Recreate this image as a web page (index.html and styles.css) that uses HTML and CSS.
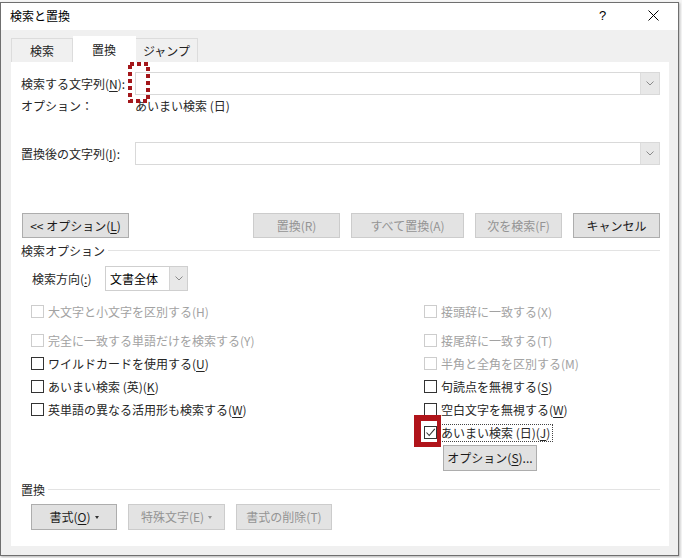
FILE: index.html
```html
<!DOCTYPE html>
<html lang="ja">
<head>
<meta charset="utf-8">
<title>検索と置換</title>
<link rel="stylesheet" href="styles.css">
</head>
<body>
<div class="window">
  <div class="titlebar">
    <span class="title">検索と置換</span>
    <span class="help">?</span>
    <span class="close"><svg width="11" height="11" viewBox="0 0 11 11"><path d="M0.5 0.5 L10.5 10.5 M10.5 0.5 L0.5 10.5" stroke="#000" stroke-width="1" fill="none"/></svg></span>
  </div>
  <div class="client">
    <div class="tabs">
      <div class="tab">検索</div>
      <div class="tab active">置換</div>
      <div class="tab">ジャンプ</div>
    </div>
    <div class="panel">
      <div class="field">
        <span class="flabel">検索する文字列(<u>N</u>):</span>
        <div class="combo"><div class="combo-btn"><svg width="8" height="5" viewBox="0 0 8 5"><path d="M0.5 0.5 L4 4 L7.5 0.5" stroke="#8a8a8a" fill="none"/></svg></div></div>
      </div>
      <div class="optline">
        <span class="flabel">オプション：</span>
        <span class="optval">あいまい検索 (日)</span>
      </div>
      <div class="field field2">
        <span class="flabel">置換後の文字列(<u>I</u>):</span>
        <div class="combo"><div class="combo-btn"><svg width="8" height="5" viewBox="0 0 8 5"><path d="M0.5 0.5 L4 4 L7.5 0.5" stroke="#8a8a8a" fill="none"/></svg></div></div>
      </div>
      <div class="btnrow">
        <button class="btn b-opt">&lt;&lt; オプション(<u>L</u>)</button>
        <div class="spacer"></div>
        <button class="btn dis b-rep">置換(R)</button>
        <button class="btn dis b-all">すべて置換(A)</button>
        <button class="btn dis b-next">次を検索(F)</button>
        <button class="btn b-cancel">キャンセル</button>
      </div>
      <div class="group g1"><span>検索オプション</span><span class="rule"></span></div>
      <div class="dir">
        <span class="dirlabel">検索方向(<u>:</u>)</span>
        <div class="select"><span class="selval">文書全体</span><div class="sel-btn"><svg width="8" height="5" viewBox="0 0 8 5"><path d="M0.5 0.5 L4 4 L7.5 0.5" stroke="#8a8a8a" fill="none"/></svg></div></div>
      </div>
      <div class="checks">
        <div class="col col-left">
          <div class="chk dis"><span class="box"></span><span>大文字と小文字を区別する(H)</span></div>
          <div class="chk dis gap"><span class="box"></span><span>完全に一致する単語だけを検索する(Y)</span></div>
          <div class="chk"><span class="box"></span><span>ワイルドカードを使用する(<u>U</u>)</span></div>
          <div class="chk"><span class="box"></span><span>あいまい検索 (英)(<u>K</u>)</span></div>
          <div class="chk"><span class="box"></span><span>英単語の異なる活用形も検索する(<u>W</u>)</span></div>
        </div>
        <div class="col col-right">
          <div class="chk dis"><span class="box"></span><span>接頭辞に一致する(X)</span></div>
          <div class="chk dis gap"><span class="box"></span><span>接尾辞に一致する(T)</span></div>
          <div class="chk dis"><span class="box"></span><span>半角と全角を区別する(M)</span></div>
          <div class="chk"><span class="box"></span><span>句読点を無視する(<u>S</u>)</span></div>
          <div class="chk"><span class="box"></span><span>空白文字を無視する(<u>W</u>)</span></div>
          <div class="chk checked"><span class="box"><svg width="11" height="11" viewBox="0 0 11 11"><path d="M1.5 5.5 L4.2 8.5 L9.8 1.8" stroke="#333" stroke-width="1.1" fill="none"/></svg></span><span class="focus">あいまい検索 (日)(<u>J</u>)</span></div>
          <button class="btn b-jopt">オプション(<u>S</u>)...</button>
        </div>
      </div>
      <div class="group g2"><span>置換</span><span class="rule"></span></div>
      <div class="btnrow2">
        <button class="btn b-fmt">書式(<u>O</u>)<span class="tri"></span></button>
        <button class="btn dis b-spc">特殊文字(E)<span class="tri"></span></button>
        <button class="btn dis b-clr">書式の削除(T)</button>
      </div>
      <svg class="dotmark" width="22" height="41" viewBox="0 0 22 41"><rect x="2" y="2" width="18" height="37" fill="none" stroke="#a3161a" stroke-width="4" stroke-dasharray="4 3"/></svg>
      <div class="redbox"></div>
    </div>
  </div>
</div>
</body>
</html>
```
FILE: styles.css
```css
html, body {
  margin: 0;
  padding: 0;
}
body {
  background: #f5f5f5;
  font-family: "Noto Sans CJK JP", "Noto Sans", sans-serif;
  font-size: 12px;
  line-height: 16px;
  color: #262626;
  width: 682px;
  height: 558px;
  overflow: hidden;
}
u {
  text-decoration: underline;
  text-underline-offset: 2px;
}
.window {
  margin-top: 2px;
  width: 677px;
  height: 552px;
  border: 1px solid #6f6f6f;
  background: #f0f0f0;
  box-shadow: 1px 1px 2px rgba(0,0,0,0.25);
}
.titlebar {
  height: 27px;
  background: #fff;
  display: flex;
  align-items: center;
  padding-left: 9px;
  padding-bottom: 2px;
  box-sizing: border-box;
}
.title {
  flex: 1;
  color: #000;
}
.help {
  width: 14px;
  margin-right: 35px;
  color: #000;
  font-family: "Liberation Sans", sans-serif;
  font-size: 13px;
}
.close {
  width: 11px;
  height: 11px;
  margin-right: 19px;
  display: flex;
}
.client {
  padding: 8px 8px 9px 10px;
}
.tabs {
  display: flex;
  height: 24px;
  align-items: flex-end;
}
.tab {
  width: 62px;
  height: 24px;
  box-sizing: border-box;
  border: 1px solid #dcdcdc;
  border-bottom: none;
  background: #f0f0f0;
  display: flex;
  align-items: center;
  justify-content: center;
  color: #222;
}
.tab + .tab {
  border-left: none;
}
.tab.active {
  width: 63px;
  height: 26px;
  background: #fff;
  border-color: #fff;
  margin-top: -2px;
}
.panel {
  position: relative;
  display: flow-root;
  background: #fff;
  width: 658px;
  height: 484px;
  box-sizing: border-box;
  padding: 0 9px 0 10px;
}
.field {
  display: flex;
  align-items: center;
  height: 23px;
  margin-top: 10px;
}
.field2 {
  margin-top: 26px;
}
.flabel {
  width: 114px;
  padding-left: 0;
  flex: none;
}
.combo {
  flex: 1;
  height: 23px;
  box-sizing: border-box;
  border: 1px solid #d9d9d9;
  display: flex;
  justify-content: flex-end;
}
.combo-btn {
  width: 18px;
  height: 21px;
  background: #e8e8e8;
  border-left: 1px solid #dddddd;
  display: flex;
  align-items: center;
  justify-content: center;
}
.optline {
  display: flex;
  align-items: center;
  height: 21px;
}
.btnrow {
  display: flex;
  margin-top: 48px;
  height: 25px;
}
.spacer {
  flex: 1;
}
.btn {
  font-family: inherit;
  font-size: 12px;
  line-height: 16px;
  height: 25px;
  padding: 0;
  box-sizing: border-box;
  border: 1px solid #adadad;
  background: #e1e1e1;
  color: #1a1a1a;
  display: flex;
  align-items: center;
  justify-content: center;
}
.btn.dis {
  color: #949494;
  border-color: #cccccc;
  background: #e3e3e3;
}
.b-opt { width: 107px; margin-left: 1px; }
.b-rep { width: 87px; }
.b-all { width: 113px; margin-left: 11px; }
.b-next { width: 87px; margin-left: 11px; }
.b-cancel { width: 87px; margin-left: 11px; margin-right: 0; }
.group {
  display: flex;
  align-items: center;
  height: 14px;
}
.group .rule {
  flex: 1;
  height: 1px;
  background: #e3e3e3;
  margin-left: 3px;
  margin-top: -2px;
}
.g1 {
  margin-top: 6px;
}
.g2 {
  margin-top: 12px;
}
.dir {
  display: flex;
  align-items: center;
  margin-top: 8px;
  height: 25px;
  padding-left: 11px;
}
.dirlabel {
  width: 73px;
}
.select {
  width: 83px;
  height: 25px;
  box-sizing: border-box;
  border: 1px solid #cfcfcf;
  display: flex;
  align-items: center;
}
.selval {
  flex: 1;
  padding-left: 4px;
  color: #000;
}
.sel-btn {
  width: 17px;
  height: 23px;
  background: #e8e8e8;
  border-left: 1px solid #d4d4d4;
  display: flex;
  align-items: center;
  justify-content: center;
}
.checks {
  display: flex;
  margin-top: 9px;
  padding-left: 10px;
}
.col {
  display: flex;
  flex-direction: column;
}
.col-left {
  width: 393px;
}
.chk {
  display: flex;
  align-items: center;
  height: 23px;
}
.chk.gap {
  margin-top: 6px;
}
.box {
  width: 13px;
  height: 13px;
  box-sizing: border-box;
  border: 1px solid #333;
  background: #fff;
  margin-right: 4px;
  flex: none;
  display: flex;
  align-items: center;
  justify-content: center;
}
.chk.dis {
  color: #a2a2a2;
}
.chk.dis .box {
  border-color: #cdcdcd;
}
.focus {
  outline: 1px dotted #444;
  outline-offset: 0;
  padding-right: 2px;
  margin-left: -1px;
  padding-left: 1px;
}
.b-jopt {
  width: 94px;
  height: 26px;
  margin-top: 1px;
  margin-left: 19px;
}
.btnrow2 {
  display: flex;
  margin-top: 7px;
  padding-left: 10px;
}
.btnrow2 .btn {
  height: 26px;
}
.b-fmt { width: 86px; }
.b-spc { width: 97px; margin-left: 11px; }
.b-clr { width: 96px; margin-left: 11px; }
.tri {
  display: inline-block;
  width: 0;
  height: 0;
  border-left: 2px solid transparent;
  border-right: 2px solid transparent;
  border-top: 3px solid #333;
  margin-left: 4px;
  margin-top: 1px;
}
.b-spc .tri {
  border-top-color: #949494;
}
.dotmark {
  position: absolute;
  left: 117px;
  top: 0;
}
.redbox {
  position: absolute;
  left: 403px;
  top: 353px;
  width: 16px;
  height: 21px;
  border-style: solid;
  border-color: #b0141a;
  border-width: 6px 4px 5px 7px;
}
```
